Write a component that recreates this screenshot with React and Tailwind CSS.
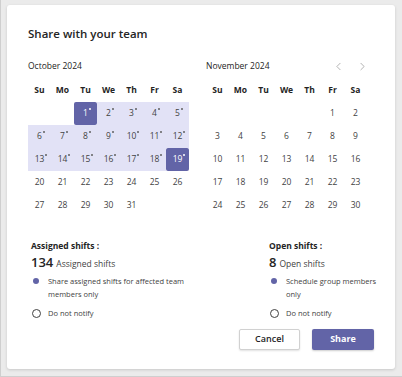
import { ChevronLeft, ChevronRight } from 'lucide-react';

const DAYS = ['Su', 'Mo', 'Tu', 'We', 'Th', 'Fr', 'Sa'];

// October 2024 starts on Tuesday, November 2024 on Friday
const october = { label: 'October 2024', offset: 2, days: 31 };
const november = { label: 'November 2024', offset: 5, days: 30 };

function DayCell({ day, inRange, selected }) {
  let cls = 'h-[23px] flex items-center justify-center';
  if (selected) cls += ' bg-[#6264a7] text-white rounded-[2px]';
  else if (inRange) cls += ' bg-[#e2e2f6] text-[#424242]';
  else cls += ' text-[#424242]';

  return (
    <div className={cls}>
      {day && (
        <span className="relative">
          {day}
          {inRange && (
            <span
              className={
                'absolute -right-[3px] top-[1px] w-[2px] h-[2px] rounded-full ' +
                (selected ? 'bg-white' : 'bg-[#616161]')
              }
            />
          )}
        </span>
      )}
    </div>
  );
}

function Month({ month, range, nav }) {
  const cells = [];
  for (let i = 0; i < month.offset; i++) cells.push(null);
  for (let d = 1; d <= month.days; d++) cells.push(d);

  return (
    <div className="w-[161px]">
      <div className="h-[14px] flex items-center justify-between text-[8.5px] text-[#242424]">
        <span>{month.label}</span>
        {nav && (
          <div className="flex items-center gap-[11px] mr-[-2px] text-[#8a8a8a]">
            <ChevronLeft size={13} strokeWidth={1.2} />
            <ChevronRight size={13} strokeWidth={1.2} />
          </div>
        )}
      </div>
      <div className="mt-[6px] grid grid-cols-7 text-[8.5px]">
        {DAYS.map((d) => (
          <div key={d} className="h-[23px] flex items-center justify-center font-bold text-[#242424]">
            {d}
          </div>
        ))}
        {cells.map((d, i) => {
          const inRange = range && d && d >= range[0] && d <= range[1];
          const selected = range && (d === range[0] || d === range[1]);
          return <DayCell key={i} day={d} inRange={inRange} selected={selected} />;
        })}
      </div>
    </div>
  );
}

function Radio({ checked, children }) {
  return (
    <div className="flex items-start gap-[7px]">
      <div className="w-[10px] h-[13px] flex items-center justify-center shrink-0">
        {checked ? (
          <div className="w-[6px] h-[6px] rounded-full bg-[#6264a7]" />
        ) : (
          <div className="w-[9px] h-[9px] rounded-full border border-[#424242]" />
        )}
      </div>
      <span className="leading-[13px]">{children}</span>
    </div>
  );
}

function ShiftBlock({ title, count, label, option }) {
  return (
    <div className="text-[#424242] text-[7.5px]">
      <div className="font-bold text-[#242424] text-[8.5px] leading-[14px]">{title}</div>
      <div className="flex items-baseline gap-[3px]">
        <span className="text-[13px] font-semibold text-[#242424]">{count}</span>
        <span className="text-[8.5px]">{label}</span>
      </div>
      <div className="mt-[2px] flex flex-col gap-[6px]">
        <Radio checked>{option}</Radio>
        <Radio>Do not notify</Radio>
      </div>
    </div>
  );
}

export default function App() {
  return (
    <div className="w-[402px] h-[377px] bg-[#ebebeb] border-l border-b border-[#cfcfcf] pl-[6px] pt-[5px] font-['Open_Sans',sans-serif]">
      <div className="w-[388px] h-[364px] bg-white rounded-[3px] shadow-[0_1px_3px_rgba(0,0,0,0.15)] pl-[21px] pr-[21px] pt-[20px]">
        <h1 className="text-[11.5px] font-semibold text-[#242424] leading-[18px]">Share with your team</h1>

        <div className="mt-[16px] flex gap-[17px]">
          <Month month={october} range={[1, 19]} />
          <Month month={november} nav />
        </div>

        <div className="mt-[22px] flex pl-[3px]">
          <div className="w-[160px] shrink-0">
            <ShiftBlock
              title="Assigned shifts :"
              count="134"
              label="Assigned shifts"
              option="Share assigned shifts for affected team members only"
            />
          </div>
          <div className="ml-[78px] w-[112px] shrink-0">
            <ShiftBlock
              title="Open shifts :"
              count="8"
              label="Open shifts"
              option="Schedule group members only"
            />
          </div>
        </div>

        <div className="mt-[9px] flex justify-end gap-[12px]">
          <button
            type="button"
            className="w-[61px] h-[21px] bg-white border border-[#d1d1d1] rounded-[2px] shadow-[0_1px_2px_rgba(0,0,0,0.12)] text-[9px] font-semibold text-[#242424]"
          >
            Cancel
          </button>
          <button
            type="button"
            className="w-[62px] h-[21px] bg-[#6264a7] rounded-[2px] shadow-[0_1px_2px_rgba(0,0,0,0.2)] text-[9px] font-bold text-white"
          >
            Share
          </button>
        </div>
      </div>
    </div>
  );
}
